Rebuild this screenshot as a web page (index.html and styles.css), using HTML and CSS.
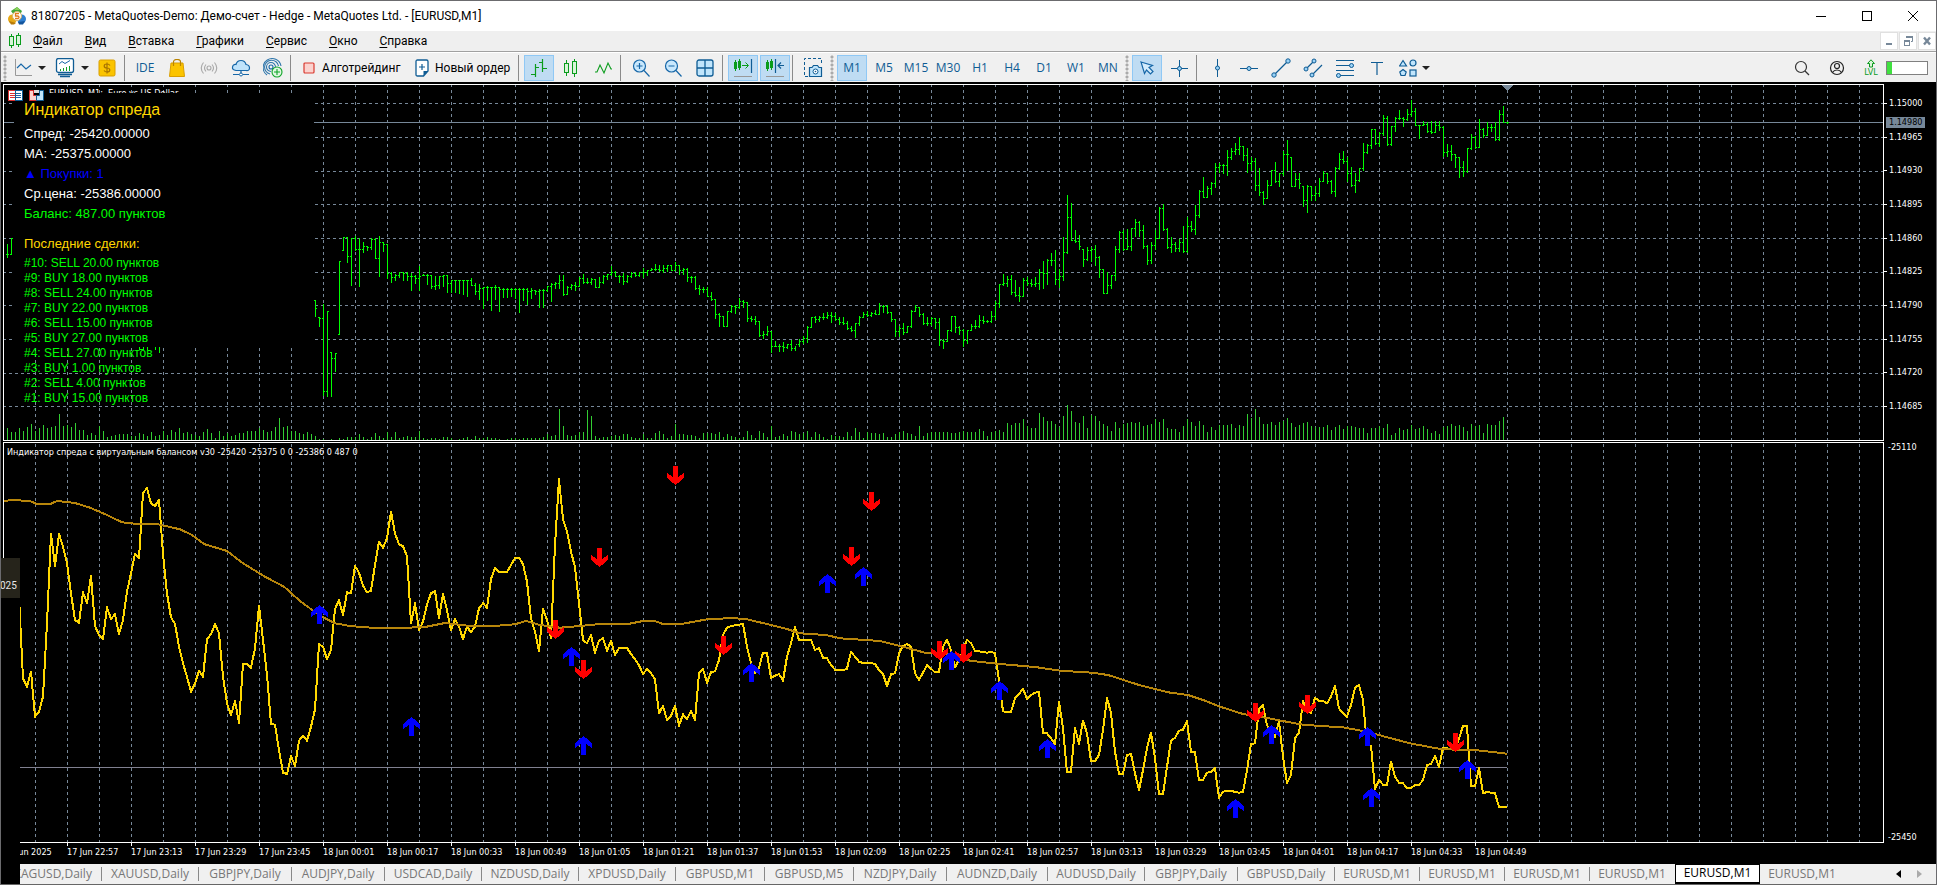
FILE: index.html
```html
<!DOCTYPE html>
<html lang="ru">
<head>
<meta charset="utf-8">
<title>81807205 - MetaQuotes-Demo: Демо-счет - Hedge - MetaQuotes Ltd. - [EURUSD,M1]</title>
<link rel="stylesheet" href="styles.css">
</head>
<body>
<div class="app">
  <header class="titlebar">
    <svg class="logo" width="18" height="18" viewBox="0 0 18 18"><path d="M9 0l5 4-2 4H6L3 4z" fill="#3fa535"/><path d="M6 3l3-3 3 3z" fill="#8bd15a"/><circle cx="4.500" cy="12" r="4.500" fill="#e6a817"/><path d="M1 14l7 2-2 1.500H3z" fill="#b87a08"/><circle cx="13.500" cy="12" r="4.500" fill="#2f7fd0"/><path d="M10 15l7-1-2 3.500h-4z" fill="#14559c"/><circle cx="9" cy="9" r="4.500" fill="#fff" stroke="#d9b56a"/><path d="M11 6.500H7.500V9h2q1.500 0 1.500 1.300T9.500 11.500H7" fill="none" stroke="#e07b1a" stroke-width="1.300"/></svg>
    <h1 class="title">81807205 - MetaQuotes-Demo: Демо-счет - Hedge - MetaQuotes Ltd. - [EURUSD,M1]</h1>
    <div class="window-controls">
      <button aria-label="Свернуть"><svg width="12" height="12"><path d="M1 6.500h10" stroke="#000"/></svg></button>
      <button aria-label="Развернуть"><svg width="12" height="12"><rect x="1.500" y="1.500" width="9" height="9" fill="none" stroke="#000"/></svg></button>
      <button aria-label="Закрыть"><svg width="12" height="12"><path d="M1 1l10 10M11 1L1 11" stroke="#000"/></svg></button>
    </div>
  </header>

  <nav class="menubar">
    <svg class="menu-icon" width="14" height="16"><g stroke="#0a9c1c" fill="#d9f5d9"><path d="M3.500 1v14M10.500 0v14"/><rect x="1.500" y="3.500" width="4" height="9"/><rect x="8.500" y="2.500" width="4" height="9"/></g></svg>
    <a href="#"><u>Ф</u>айл</a>
    <a href="#"><u>В</u>ид</a>
    <a href="#"><u>В</u>ставка</a>
    <a href="#"><u>Г</u>рафики</a>
    <a href="#"><u>С</u>ервис</a>
    <a href="#"><u>О</u>кно</a>
    <a href="#"><u>С</u>правка</a>
    <div class="mdi-controls">
      <button aria-label="Свернуть график"><svg width="12" height="12"><path d="M3 9h6" stroke="#778899" stroke-width="2"/></svg></button>
      <button aria-label="Восстановить график"><svg width="12" height="12"><path d="M4.500 3V1.500h6v5H9" fill="none" stroke="#778899"/><path d="M4 2h7" stroke="#778899" stroke-width="2"/><rect x="2.500" y="5.500" width="5" height="5" fill="#fff" stroke="#778899"/><path d="M2 6h6" stroke="#778899" stroke-width="2"/></svg></button>
      <button aria-label="Закрыть график"><svg width="12" height="12"><path d="M3 2.500l6 7M9 2.500l-6 7" stroke="#778899" stroke-width="2.400"/></svg></button>
    </div>
  </nav>

  <div class="toolbar">
    <span class="grip"></span>
    <button class="tool tool--split" aria-label="Вид графика"><svg width="18" height="18"><path d="M1.500 0v16.500H18" fill="none" stroke="#999"/><path d="M3 9l4-4 5 5 5-4" fill="none" stroke="#1767a8" stroke-width="1.200"/></svg><i class="caret"></i></button>
    <button class="tool tool--split" aria-label="Профили"><svg width="20" height="20"><rect x="1.500" y=".5" width="17" height="14" rx="2" fill="#fff" stroke="#0f5c94" stroke-width="1.300"/><path d="M4 6l3-2.500 3 2 5-3" fill="none" stroke="#1767a8"/><path d="M5.500 13v-2M8.500 13v-3M11.500 13V9M14.500 13V8" stroke="#12a02a"/><path d="M3 16.500h14M5 18.500h10" stroke="#0f5c94" stroke-width="1.300"/></svg><i class="caret"></i></button>
    <button class="tool" aria-label="Счет"><svg width="18" height="18"><rect x="1" y="1" width="16" height="16" rx="1.500" fill="#fbc400" stroke="#d99e00"/><path d="M9 3.500v11M12 6.500Q11 5 9 5 6.200 5 6.200 7T9 9t2.800 2T9 13q-2 0-3-1.500" fill="none" stroke="#a87400" stroke-width="1.200"/></svg></button>
    <span class="sep"></span>
    <button class="tool tool--text">IDE</button>
    <button class="tool" aria-label="Маркет"><svg width="18" height="18"><path d="M3 4h12l1.500 13.500h-15z" fill="#fbc400" stroke="#d99e00"/><path d="M5.500 7V3q0-2.500 3.500-2.500T12.500 3v4" fill="none" stroke="#b98300" stroke-width="1.200"/></svg></button>
    <button class="tool" aria-label="Сигналы"><svg width="18" height="18" fill="none" stroke="#a8a8a8" stroke-width="1.100"><circle cx="9" cy="9" r="2"/><path d="M6 5.500q-3 3.500 0 7M12 5.500q3 3.500 0 7M3.500 3.500q-4.500 5.500 0 11M14.500 3.500q4.500 5.500 0 11"/></svg></button>
    <button class="tool" aria-label="VPS"><svg width="20" height="18"><path d="M5 11.500Q1 11 1.500 8T5 5.500Q6 1.500 10 1.500t5 4Q18.500 6 18.500 9T15 11.500z" fill="#bfe3fb" stroke="#1767a8" stroke-width="1.200"/><path d="M10 12v4M2 15.500h6M12 15.500h6" stroke="#1767a8" stroke-width="1.200"/><circle cx="10" cy="15.500" r="1.500" fill="#fff" stroke="#1767a8"/></svg></button>
    <button class="tool" aria-label="Виртуальный хостинг"><svg width="20" height="20" fill="none" stroke="#1767a8" stroke-width="1.100"><circle cx="8" cy="9" r="2"/><path d="M8 13.500A4.500 4.500 0 1 1 12.500 9M7 16A7 7 0 1 1 15.500 8M4 17A9 9 0 1 1 18 8" stroke="#2f76ab"/><circle cx="14" cy="14" r="5" fill="#e2f7e2" stroke="#0fa527"/><path d="M14 11v6M11 14h6" stroke="#0fa527"/></svg></button>
    <span class="sep"></span>
    <button class="tool tool--label tool--algo"><svg width="12" height="12"><rect x="1" y="1" width="10" height="10" rx="1" fill="#fbd3cf" stroke="#d93a30" stroke-width="1.200"/></svg>Алготрейдинг</button>
    <button class="tool tool--label tool--order"><svg width="14" height="18"><path d="M2.500 1h9Q13 1 13 2.500V12l-4.500 5h-6Q1 17 1 15.500v-13Q1 1 2.500 1z" fill="#fff" stroke="#0f5c94" stroke-width="1.300"/><path d="M13 12H8.500v5z" fill="#0f5c94"/><path d="M7 5v6M4 8h6" stroke="#0f5c94" stroke-width="1.200"/></svg>Новый ордер</button>
    <span class="sep"></span>
    <button class="tool is-active" aria-label="Бары"><svg width="18" height="18" fill="none" stroke="#0a9c1c" stroke-width="1.200"><path d="M5.500 5v13M1 15.500h4.500M5.500 8.500H9M12.500 0v13M9 3.500h3.500M12.500 9.500H17"/></svg></button>
    <button class="tool" aria-label="Свечи"><svg width="18" height="18" stroke="#0a9c1c" fill="#d9f5d9"><path d="M4.500 1v16M12.500 0v18"/><rect x="2.500" y="4.500" width="4" height="9"/><rect x="10.500" y="2.500" width="4" height="12"/></svg></button>
    <button class="tool" aria-label="Линия"><svg width="18" height="18"><path d="M1 13h2l3-7 4 8 4-10 3 6h1" fill="none" stroke="#0a9c1c" stroke-width="1.100"/></svg></button>
    <span class="sep"></span>
    <button class="tool" aria-label="Увеличить"><svg width="18" height="18" fill="none" stroke="#1767a8" stroke-width="1.200"><circle cx="7.500" cy="7" r="6" fill="#c9e8fd"/><path d="M12 11.500l5.500 6M7.500 4v6M4.500 7h6"/></svg></button>
    <button class="tool" aria-label="Уменьшить"><svg width="18" height="18" fill="none" stroke="#1767a8" stroke-width="1.200"><circle cx="7.500" cy="7" r="6" fill="#c9e8fd"/><path d="M12 11.500l5.500 6M4.500 7h6"/></svg></button>
    <button class="tool" aria-label="Сетка окон"><svg width="18" height="18"><rect x="1" y="1" width="16" height="16" rx="2" fill="#c0e5fc" stroke="#0f5c94" stroke-width="1.300"/><path d="M9 1v16M1 9h16" stroke="#0f5c94" stroke-width="1.300"/></svg></button>
    <span class="sep"></span>
    <button class="tool is-active" aria-label="Автопрокрутка"><svg width="20" height="20" fill="none" stroke="#0a9c1c"><path d="M2.500 2v11M6.500 1v11M9 7.500h6M12.500 4.500l3 3-3 3"/><rect x="1.500" y="4.500" width="2" height="6"/><rect x="5.500" y="3.500" width="2" height="6"/><path d="M18.500 1v14" stroke="#0f5c94" stroke-width="1.200"/><path d="M1 18.500h18" stroke="#999"/></svg></button>
    <button class="tool is-active" aria-label="Сдвиг графика"><svg width="20" height="20" fill="none" stroke="#0a9c1c"><path d="M2.500 2v11M6.500 1v11"/><rect x="1.500" y="4.500" width="2" height="6"/><rect x="5.500" y="3.500" width="2" height="6"/><path d="M10.500 1v14M19 7.500h-6M16 4.500l-3 3 3 3" stroke="#0f5c94" stroke-width="1.200"/><path d="M1 18.500h18" stroke="#999"/></svg></button>
    <span class="sep"></span>
    <button class="tool" aria-label="Снимок"><svg width="20" height="20"><path d="M5 18.500H1.500v-18h17V7" fill="none" stroke="#0f5c94" stroke-dasharray="3 2"/><path d="M6.500 9.500H9l1.500-2h4l1.500 2h2.500v9h-12z" fill="#c0e5fc" stroke="#0f5c94" stroke-width="1.200"/><circle cx="12.500" cy="13.500" r="2.500" fill="#fff" stroke="#0f5c94"/><circle cx="12.500" cy="13.500" r=".8" fill="#0f5c94"/></svg></button>
    <span class="grip"></span>
    <button class="tool tool--text is-active">M1</button>
    <button class="tool tool--text">M5</button>
    <button class="tool tool--text">M15</button>
    <button class="tool tool--text">M30</button>
    <button class="tool tool--text">H1</button>
    <button class="tool tool--text">H4</button>
    <button class="tool tool--text">D1</button>
    <button class="tool tool--text">W1</button>
    <button class="tool tool--text">MN</button>
    <span class="grip"></span>
    <button class="tool is-active" aria-label="Курсор"><svg width="18" height="18"><path d="M3 3l11.500 3.500-3.500 2 4 4-2.500 2.500-4-4-2 3.500z" fill="#d4ecfc" stroke="#1767a8" stroke-width="1.200"/></svg></button>
    <button class="tool" aria-label="Перекрестие"><svg width="18" height="18" stroke="#0f5c94"><path d="M9.500 1v17M1 9.500h17"/><circle cx="9.500" cy="9.500" r="2" fill="#9bd3f7"/></svg></button>
    <span class="sep"></span>
    <button class="tool" aria-label="Вертикальная линия"><svg width="18" height="20" stroke="#0f5c94"><path d="M9.500 1v18"/><circle cx="9.500" cy="10" r="2" fill="#9bd3f7"/></svg></button>
    <button class="tool" aria-label="Горизонтальная линия"><svg width="20" height="18" stroke="#0f5c94"><path d="M1 9.500h18"/><circle cx="10" cy="9.500" r="2" fill="#9bd3f7"/></svg></button>
    <button class="tool" aria-label="Трендовая линия"><svg width="20" height="20" stroke="#0f5c94"><path d="M3 17L17 3" stroke-width="1.200"/><circle cx="3" cy="17" r="2.200" fill="#9bd3f7"/><circle cx="17" cy="3" r="2.200" fill="#9bd3f7"/></svg></button>
    <button class="tool" aria-label="Канал"><svg width="20" height="20" stroke="#0f5c94"><path d="M3 11l8-8M9 17L19 7" stroke-width="1.200"/><circle cx="3" cy="11" r="2" fill="#9bd3f7"/><circle cx="11" cy="3" r="2" fill="#9bd3f7"/><circle cx="9" cy="17" r="2" fill="#9bd3f7"/></svg></button>
    <button class="tool" aria-label="Фибоначчи"><svg width="20" height="20" stroke="#0f5c94"><path d="M1 2.500h18M1 7.500h18M1 12.500h18M1 17.500h18"/><circle cx="16.500" cy="7.500" r="2" fill="#9bd3f7"/><circle cx="3.500" cy="17.500" r="2" fill="#9bd3f7"/></svg></button>
    <button class="tool" aria-label="Текст"><svg width="16" height="16"><path d="M2 2.500h12M8 2.500V15" stroke="#0f5c94" stroke-width="1.200"/></svg></button>
    <button class="tool tool--shapes" aria-label="Фигуры"><svg width="18" height="18" fill="#c0e5fc" stroke="#0f5c94" stroke-width="1.200"><path d="M4 1.500L7.500 7h-7z"/><circle cx="14" cy="4" r="3"/><path d="M4 10.500l3.200 2.500-1.200 3.500H2L.8 13z"/><rect x="11" y="11" width="6" height="6"/></svg><i class="caret"></i></button>
    <div class="toolbar-end">
      <button class="tool" aria-label="Поиск"><svg width="16" height="16" fill="none" stroke="#333" stroke-width="1.200"><circle cx="7" cy="7" r="5.500"/><path d="M11 11l4 4"/></svg></button>
      <button class="tool" aria-label="Профиль"><svg width="16" height="16" fill="none" stroke="#222" stroke-width="1.200"><circle cx="8" cy="8" r="6.500"/><circle cx="8" cy="6" r="2.500"/><path d="M3.500 12.500Q5 10 8 10t4.500 2.500"/></svg></button>
      <span class="lvl"><svg width="10" height="9"><path d="M5 .8L8.500 4.500H6.500V8H3.500V4.500h-2z" fill="#d9f5d9" stroke="#0a9c1c"/></svg>LVL</span>
      <span class="meter"><i></i></span>
    </div>
  </div>

  <main class="charts">
    <section class="panel panel--price">
      <div class="plot" id="price"></div>
      <ol class="scale">
        <li>1.15000</li><li>1.14965</li><li>1.14930</li><li>1.14895</li><li>1.14860</li><li>1.14825</li><li>1.14790</li><li>1.14755</li><li>1.14720</li><li>1.14685</li>
      </ol>
      <span class="price-tag">1.14980</span>
      <div class="symbol">EURUSD, M1:  Euro vs US Dollar</div>
      <div class="info">
        <h2>Индикатор спреда</h2>
        <p>Спред: -25420.00000</p>
        <p>MA: -25375.00000</p>
        <p class="buy">▲ Покупки: 1</p>
        <p>Ср.цена: -25386.00000</p>
        <p class="gain">Баланс: 487.00 пунктов</p>
        <h3>Последние сделки:</h3>
        <ul>
          <li>#10: SELL 20.00 пунктов</li><li>#9: BUY 18.00 пунктов</li><li>#8: SELL 24.00 пунктов</li><li>#7: BUY 22.00 пунктов</li><li>#6: SELL 15.00 пунктов</li><li>#5: BUY 27.00 пунктов</li><li>#4: SELL 27.00 пунктов</li><li>#3: BUY 1.00 пунктов</li><li>#2: SELL 4.00 пунктов</li><li>#1: BUY 15.00 пунктов</li>
        </ul>
      </div>
      <div class="badges">
        <svg width="15" height="12"><rect x=".5" y=".5" width="7" height="10" fill="#fff" stroke="#d92f2f"/><rect x="7.500" y=".5" width="7" height="10" fill="#fff" stroke="#0f5c94"/><path d="M2 3.500h5M2 5.500h5M2 7.500h5" stroke="#d92f2f"/><path d="M8 3.500h5M8 5.500h5M8 7.500h5" stroke="#1767a8"/></svg>
        <svg width="15" height="12"><path d="M.5.500h4v5h3v5h-7z" fill="#fbd3cf" stroke="#d92f2f"/><path d="M14.500.500h-4v5h-3v5h7z" fill="#c0e5fc" stroke="#0f5c94"/><rect x="5" y="0" width="5" height="3" fill="#ddd"/></svg>
      </div>
    </section>
    <section class="panel panel--spread">
      <div class="plot" id="spread"></div>
      <ol class="scale"><li>-25110</li><li>-25450</li></ol>
      <div class="caption">Индикатор спреда с виртуальным балансом v30 -25420 -25375 0 0 -25386 0 487 0</div>
    </section>
    <ol class="timeline" id="timeline"></ol>
    <div class="edge"><span>025</span></div>
  </main>

  <nav class="tabs">
    <a href="#" class="tab w97">XAGUSD,Daily</a>
    <a href="#" class="tab w97">XAUUSD,Daily</a>
    <a href="#" class="tab">GBPJPY,Daily</a>
    <a href="#" class="tab">AUDJPY,Daily</a>
    <a href="#" class="tab w97">USDCAD,Daily</a>
    <a href="#" class="tab w97">NZDUSD,Daily</a>
    <a href="#" class="tab w97">XPDUSD,Daily</a>
    <a href="#" class="tab w89">GBPUSD,M1</a>
    <a href="#" class="tab w89">GBPUSD,M5</a>
    <a href="#" class="tab">NZDJPY,Daily</a>
    <a href="#" class="tab w101">AUDNZD,Daily</a>
    <a href="#" class="tab w97">AUDUSD,Daily</a>
    <a href="#" class="tab">GBPJPY,Daily</a>
    <a href="#" class="tab w97">GBPUSD,Daily</a>
    <a href="#" class="tab w85">EURUSD,M1</a>
    <a href="#" class="tab w85">EURUSD,M1</a>
    <a href="#" class="tab w85">EURUSD,M1</a>
    <a href="#" class="tab w85 tab--bare">EURUSD,M1</a>
    <a href="#" class="tab w85 tab--current" aria-current="page">EURUSD,M1</a>
    <a href="#" class="tab w85 tab--bare">EURUSD,M1</a>
    <div class="tab-scroll">
      <button aria-label="Назад"><svg width="5" height="8"><path d="M5 0v8L0 4z" fill="#000"/></svg></button>
      <button aria-label="Вперед"><svg width="5" height="8"><path d="M0 0v8l5-4z" fill="#aaa"/></svg></button>
    </div>
  </nav>
</div>
<script src="chart.js"></script>
</body>
</html>
```

FILE: styles.css
```css
* { box-sizing: border-box; }
body { margin: 0; background: #000; font: 12px/16px "Open Sans", "Noto Sans", sans-serif; color: #000; }
h1, h2, h3, p, ul, ol { margin: 0; padding: 0; font-weight: 400; list-style: none; }
button { border: 0; padding: 0; background: none; font: inherit; color: inherit; }
a { color: inherit; text-decoration: none; }
svg { display: block; flex: none; }

.app { display: flex; flex-direction: column; height: 100vh; overflow: hidden; border: 1px solid #6b6b6e; border-bottom-color: #666; }

.titlebar { display: flex; align-items: center; flex: none; height: 30px; padding-left: 7px; background: #fff; }
.title { margin-left: 5px; font: 12px/16px Roboto, sans-serif; flex: 1; white-space: nowrap; }
.window-controls { display: flex; }
.window-controls button { width: 46px; height: 30px; display: grid; place-items: center; }

.menubar { display: flex; align-items: center; flex: none; height: 21px; padding-left: 7px; background: #efefef; border-bottom: 1px solid #a0a0a0; font-family: Roboto, sans-serif; }
.menu-icon { margin-right: 7px; }
.menubar a { padding: 0 11px 0 4px; margin-right: 7px; }
.menubar u { text-underline-offset: 2px; }
.mdi-controls { display: flex; gap: 1px; margin-left: auto; }
.mdi-controls button { width: 18px; height: 18px; display: grid; place-items: center; background: #fff; border: 1px solid #e0e0e0; }

.toolbar { display: flex; align-items: center; gap: 2px; flex: none; height: 30px; padding: 1px 8px 0 2px; background: #f0f0f0; border-top: 1px solid #fff; color: #000; }
.grip { width: 5px; height: 26px; background: radial-gradient(circle at 2px 2px, #aaa 1px, transparent 2px) 0 0 / 5px 4px; }
.sep { width: 4px; height: 26px; border-left: 1px solid #8a8a8a; }
.tool { flex: none; width: 30px; height: 26px; display: flex; align-items: center; justify-content: center; border: 1px solid transparent; white-space: nowrap; }
.tool.is-active { background: #bfdcf3; border-color: #8fc8f5; }
.tool--split { width: 39px; justify-content: flex-start; gap: 6px; padding-left: 3px; }
.tool--text { color: #0f5c94; }
.tool--label { justify-content: flex-start; padding-left: 6px; gap: 7px; font-family: Roboto, sans-serif; }
.tool--algo { width: 110px; }
.tool--order { width: 108px; gap: 6px; }
.tool--shapes { width: 40px; gap: 5px; }
.caret { border: 4px solid transparent; border-top-color: #222; border-bottom: 0; }
.toolbar-end { display: flex; align-items: center; margin-left: auto; gap: 1px; }
.toolbar-end .tool { margin-right: 4px; }
.lvl { width: 28px; display: flex; flex-direction: column; align-items: center; font: 9px/9px "DejaVu Sans Condensed", sans-serif; color: #0a9c1c; }
.meter { width: 42px; height: 14px; border: 1px solid #808080; background: #fff; }
.meter i { display: block; width: 5px; height: 12px; background: #40e040; }

.charts { position: relative; flex: 1; min-height: 0; display: flex; flex-direction: column; background: #000; padding: 2px 0 0 2px; color: #fff; font: 9px/11px "DejaVu Sans Condensed", "DejaVu Sans", sans-serif; }
.panel { position: relative; display: flex; min-height: 0; }
.panel--price { flex: 357 1 0; margin-bottom: 1px; }
.panel--spread { flex: 401 1 0; }
.plot { flex: 1; min-width: 0; border: 1px solid #fff; overflow: hidden; }
.scale { width: 52px; display: flex; flex-direction: column; justify-content: space-between; }
.panel--price .scale { padding: 14px 0 29px; }
.panel--spread .scale { padding: 0; }
.scale li { display: flex; align-items: center; gap: 2px; white-space: nowrap; }
.panel--price .scale li::before { content: ""; width: 3px; height: 1px; background: #fff; }
.panel--spread .scale li { padding-left: 4px; }
.price-tag { position: absolute; right: 11px; top: 33px; width: 39px; padding-left: 3px; background: #778899; color: #000; }
.symbol { position: absolute; left: 46px; top: 4px; white-space: pre; }
.caption { position: absolute; left: 4px; top: 5px; }

.info { position: absolute; left: 11px; top: 9px; width: 300px; height: 254px; padding: 7px 0 0 10px; background: #000; font: 13px/20px "Liberation Sans", Arial, sans-serif; white-space: nowrap; }
.info h2 { margin-bottom: 4px; font-size: 16px; line-height: 20px; color: #ffd700; }
.info h3 { margin-top: 10px; font-size: 13px; line-height: 20px; color: #ffd700; }
.info ul { margin-top: 2px; font-size: 12px; line-height: 15px; color: #0f0; }
.info .buy { color: #00f; }
.info .gain { color: #0f0; }
.badges { position: absolute; left: 5px; top: 6px; display: flex; gap: 6px; }

.timeline { display: flex; flex: none; height: 21px; overflow: hidden; }
.timeline li { flex: none; width: 64px; padding-top: 4px; white-space: nowrap; position: relative; }
.timeline li::before { content: ""; position: absolute; left: 0; top: 0; width: 1px; height: 3px; background: #fff; }
.edge { position: absolute; left: -1px; bottom: -21px; width: 20px; height: 327px; background: #000; z-index: 1; }
.edge span { display: block; height: 40px; padding-top: 21px; background: #26241b; font: 10px/14px Roboto, sans-serif; color: #e8e8e8; }

.tabs { display: flex; align-items: center; flex: none; height: 20px; padding-left: 4px; background: #f0f0f0; color: #777; }
.tab { flex: none; width: 93px; height: 14px; line-height: 14px; text-align: center; border-right: 1px solid #888; white-space: nowrap; }
.w85 { width: 85px; }
.w89 { width: 89px; }
.w97 { width: 97px; }
.w101 { width: 101px; }
.tab--bare { border-right-color: transparent; }
.tab--current { height: 20px; line-height: 16px; background: #fff; border: 1px solid #000; border-bottom-width: 2px; color: #000; }
.tab-scroll { display: flex; gap: 16px; margin-left: auto; padding-right: 14px; }
```

FILE: chart.js
```js
(function () {
  var NS = 'http://www.w3.org/2000/svg';
  var STEP = 4;

  function nums(s) { return s.trim().split(/[\s,]+/).map(Number); }

  function el(parent, name, attrs) {
    var n = document.createElementNS(NS, name);
    for (var k in attrs) n.setAttribute(k, attrs[k]);
    parent.appendChild(n);
    return n;
  }

  function surface(id, left, top) {
    var host = document.getElementById(id);
    var svg = el(host, 'svg', { width: '100%', height: '100%' });
    var g = el(svg, 'g', { transform: 'translate(' + -left + ' ' + -top + ')', 'shape-rendering': 'crispEdges', fill: 'none' });
    return { g: g, right: left + host.clientWidth, bottom: top + host.clientHeight };
  }

  function verticals(s, y0) {
    var d = '';
    for (var x = 35; x < s.right; x += 32) d += 'M' + (x + 0.5) + ' ' + y0 + 'V' + s.bottom;
    el(s.g, 'path', { d: d, stroke: '#778899', 'stroke-dasharray': '3 3' });
  }

  /* price panel */
  var p = surface('price', 4, 85);
  verticals(p, 84);
  var hd = '';
  [103, 137, 171, 204, 238, 272, 305, 339, 373, 406].forEach(function (y) { hd += 'M3 ' + (y + 0.5) + 'H' + p.right; });
  el(p.g, 'path', { d: hd, stroke: '#778899', 'stroke-dasharray': '3 3' });
  el(p.g, 'path', { d: 'M3 122.5H' + p.right, stroke: '#778899' });
  el(p.g, 'path', { d: 'M1502 85h11l-5.500 6z', fill: '#778899' });

  /* volume heights, one per bar from x = 7 */
  var vol = [
    [7, '12 8 8 12 9 13 16 9 12 15 12 13 14 26 14 15 13 17 10 10 5 7 5 14 9 3 4 5 6 6 6 4 4 7 6 4 8 4 5 9 5 10 8 12 7 8 6 5 4 8 11 7 2 9 4 7 4 5 7 7 9 9 9 12 10 8 9 13 22 13 14 9 9 7 6 8 6 4'],
    [319, '1 1 0 1 0 2 1 3 3 3 6 3 1 3 7 4 2 8 3 8 2 3 4 3 3 9 2 1 2 2 1 3 3 2 0 1 2 3 1 4 2 2 3 2 2 1 0 1 2 2 1 2 2 2 2 2 3 6 4 5 31 14 5 4 5 8 8 30 24 4 2 3 3 4 5 4 6 6 3 2 2 6 2 2 7 9 6 2 4 16 6 6 5 5 4 2 7 7 7 6 8 3 6 4 3 2 3 9 5 2 9 7 3 14 3 4 6 4 9 8 6 7 9 3 8 6 3 1 5 4 4 3 8 4 12 8 2 8 7 7 6'],
    [883, '7 3 3 6 8 9 7 6 4 14 4 7 8 8 8 8 8 7 7 8 9 8 8 8 11 9 4 8 9 10 8 17 15 17 17 21 14 12 12 27 23 19 19 16 13 24 35 29 18 17 24 12 25 24 19 16 14 9 18 12 16 17 18 17 18 14 15 16 21 18 21 12 11 11 8 14 21 18 14 19 15 8 13 10 15 15 15 16 12 15 14 26 22 31 23 16 16 18 15 18 19 22 17 13 15 17 18 14 13 13 13 15 10 13 15 11 14 14 13 12 12 7 12 12 14 12 16 5 7 12 10 11 15 11 12 14 11 7 9 6 13 14 16 14 15 13 9 16 14 15 7 16 15 15 19 23']
  ];
  var vd = '';
  vol.forEach(function (v) {
    nums(v[1]).forEach(function (h, i) { vd += 'M' + (v[0] + i * STEP + 0.5) + ' 440v' + -h; });
  });
  el(p.g, 'path', { d: vd, stroke: '#32cd32' });

  /* bars as high, low, close in thirds of a pixel; the open is the previous close */
  var bars = [
    [7, 80, 523, '493 533 523, 475 523 476'],
    [315, 220, 240, '240 288 265, 291 320 295, 252 525 515, 273 528 273, 396 530 415, 400 453 400, 124 342 124, 52 90 52, 52 126 108, 55 195 55, 50 92 88, 55 200 88, 67 98 79, 79 90 82, 56 87 58, 56 116 115, 48 168 68, 68 93 72, 72 175 160, 156 186 172, 163 180 167, 157 173 157, 157 182 160, 157 182 168, 160 212 168, 165 190 175, 138 212 170, 163 167 165, 163 192 165, 167 205 200, 168 207 197, 168 204 170, 166 200 166, 166 218 190, 180 218 182, 180 218 182, 181 219 182, 181 222 182, 181 228 180, 175 196 195, 190 222 215, 192 237 205, 203 266 203, 200 240 203, 203 272 203, 196 237 203, 203 273 207, 205 232 207, 205 232 207, 205 228 207, 205 236 207, 205 278 207, 205 240 207, 205 252 213, 205 235 212, 210 222 213, 207 263 210, 207 262 210, 200 215 200, 190 243 193, 186 205 190, 165 205 182, 165 225 222, 200 224 203, 193 207 195, 186 210 200, 173 200 175, 163 190 186, 175 190 188, 175 192 177, 178 203 202, 173 203 187, 165 190 168, 162 178 163, 140 165 157, 153 168 168, 166 186 170, 160 192 184, 167 187 168, 157 172 160, 158 168 166, 157 168 158, 145 173 157, 151 165 152, 145 152 148, 132 150 148, 135 153 150, 135 156 146, 136 155 136, 135 152 150, 127 150 135, 136 162 150, 145 162 148, 145 183 172, 168 186 172, 168 209 205, 197 222 207, 201 218 208, 202 230 229, 218 240 238, 238 296 284, 280 320 290, 290 320 318, 273 320 275, 256 277 258, 257 280 262, 235 265 243, 242 262 248, 247 305 295, 290 303 297, 290 312 304, 304 350 347, 333 354 343, 318 347 334, 333 398 378, 363 380 379, 372 393 378, 366 395 382, 372 385 373, 362 390 386, 378 392 373, 357 380 364, 350 370 355, 318 368 322, 291 322 292, 288 308 298, 288 303 292, 279 298 292, 278 294 285, 276 308 290, 280 300 298, 293 312 307, 291 312 310, 303 328 325, 320 335 332, 310 353 310, 288 315 292, 278 293 282, 275 290 287, 276 290 280, 272 284 282, 250 282 258, 255 276 260, 255 280 278, 276 303 298, 298 350 335'],
    [899, 80, 755, '740 770 745, 730 762 757, 738 758 740, 690 743 693, 676 695 682, 682 710 703, 700 732 730, 711 735 730, 711 737 714, 714 746 728, 714 795 780, 778 806 784, 750 785 752, 709 755 710, 709 758 742, 738 763 750, 748 800 782, 750 790 751, 732 752 740, 720 745 740, 705 743 722, 708 730 724, 720 728 725, 693 728 710, 664 718 670, 612 682 613, 583 615 610, 588 620 598, 585 642 637, 600 648 645, 622 665 650, 594 650 602, 592 615 610, 597 620 613, 591 620 610, 567 628 577, 543 624 580, 537 614 541, 519 557 541, 510 613 598, 568 622 590, 472 602 517, 345 521 412, 369 482 480, 450 488 484, 465 508 498, 508 560 538, 502 540 511, 502 545 508, 495 555 533, 528 593 568, 568 640 640, 578 640 615, 585 625 587, 498 602 508, 453 518 458, 450 510 507, 447 508 500, 445 512 445, 417 470 428, 423 470 452, 435 506 498, 496 553 541, 487 550 497, 450 508 475, 381 475 384, 373 450 448, 444 506 502, 472 518 493, 488 515 505, 477 515 487, 438 516 514, 413 516 440, 423 453 447, 375 463 405, 330 413 334, 291 353 352, 320 353 325, 306 342 309, 250 323 262, 250 278 255, 252 280 256, 210 285 233, 204 237 213, 189 224 208, 173 224 200, 200 242 226, 204 278 249, 232 272 245, 235 332 316, 264 345 336, 333 372 355, 300 356 316, 270 316 272, 246 308 304, 280 318 280, 215 285 223, 180 270 223, 232 320 320, 280 320 297, 280 325 310, 319 380 360, 315 396 320, 318 362 345, 318 362 341, 294 348 303, 273 305 280, 280 310 303, 300 341 334, 263 350 265, 220 267 238, 213 251 244, 232 303 280, 262 318 317, 280 338 300, 264 305 266, 189 272 217, 192 220 196, 148 206 149, 148 194 190, 156 198 160, 105 165 115, 108 197 193, 138 195 140, 113 155 115, 90 117 116, 111 140 118, 87 120 104, 60 108 94, 84 137 136, 136 176 136, 123 137 134, 128 158 153, 124 161 157, 123 158 136, 124 152 142, 138 228 217, 192 230 215, 195 240 224, 222 262 233, 232 293 263, 245 290 275, 204 277 206, 163 208 172, 170 206 203, 117 203 149, 145 171 166, 127 166 142, 132 155 142, 128 182 178, 90 182 103, 78 127 127, 127 129 127']
  ];
  var bd = '';
  bars.forEach(function (b) {
    var v = nums(b[3]), open = b[2];
    function y(t) { return Math.floor(b[1] + t / 3); }
    for (var i = 0; i < v.length; i += 3) {
      var x = b[0] + (i / 3) * STEP;
      bd += 'M' + (x + 0.5) + ' ' + y(v[i]) + 'V' + (y(v[i + 1]) + 1);
      bd += 'M' + (x - 1) + ' ' + (y(Math.max(v[i], Math.min(open, v[i + 1]))) + 0.5) + 'h1';
      bd += 'M' + (x + 1) + ' ' + (y(v[i + 2]) + 0.5) + 'h1';
      open = v[i + 2];
    }
  });
  /* lows that stick out under the info box */
  bd += 'M139.5 347v3M143.5 347v3M147.5 347v3M140 349.5h3M155.5 347v3M159.5 347v6';
  el(p.g, 'path', { d: bd, stroke: '#00ff00' });

  /* spread panel */
  var s = surface('spread', 4, 443);
  verticals(s, 444);
  el(s.g, 'path', { d: 'M4 767.5H1507', stroke: '#808090' });

  var ma = nums('4 213 12 210 30 213 36 221 51 221 57 213 75 219 90 233 107 255 122 277 135 281 158 283 180 298 192 315 204 342 227 363 243 400 265 440 284 470 300 513 319 555 335 580 350 588 375 594 400 594 425 591 445 579 468 587 498 587 515 583 526 573 540 585 560 593 580 588 600 582 628 582 643 573 655 573 662 581 683 581 707 568 733 564 747 568 768 583 788 598 800 610 826 615 840 625 880 633 905 652 925 668 950 672 970 692 1000 702 1035 711 1060 722 1092 728 1108 735 1140 766 1168 787 1188 795 1205 812 1220 830 1243 852 1271 866 1300 883 1320 888 1343 892 1368 906 1385 920 1410 940 1442 958 1475 960 1507 971');
  var spread = nums('500 745 770 725 860 845 800 580 312 408 312 350 400 490 570 578 487 520 437 588 615 627 532 567 552 612 570 485 430 372 385 188 175 220 228 210 370 490 562 582 650 700 740 786 760 722 740 628 612 583 610 740 820 855 813 878 703 703 713 655 528 630 735 882 884 960 1028 1032 978 1008 932 917 932 890 838 643 650 688 660 537 510 555 487 490 408 428 467 487 482 405 335 353 325 245 310 343 349 378 580 520 600 575 523 490 483 565 493 540 600 567 590 627 590 607 590 535 520 533 447 413 426 426 426 405 384 383 402 455 565 605 663 537 570 625 345 148 268 305 365 412 520 630 640 615 668 632 625 662 632 675 654 654 654 672 688 706 732 717 730 748 850 828 870 857 828 887 853 868 842 870 730 717 758 727 724 690 615 593 588 586 584 582 650 700 730 713 668 670 745 737 732 752 680 640 592 630 630 630 630 660 655 683 685 705 719 721 721 716 666 680 695 699 699 699 702 720 732 768 733 730 670 648 642 650 730 750 728 705 716 727 725 650 629 660 712 690 660 629 640 662 664 666 668 665 670 750 844 846 846 805 793 776 806 795 788 786 908 910 925 942 815 895 1026 1026 893 942 872 910 993 993 975 900 803 850 965 1031 1031 975 972 1030 1080 1020 955 908 985 1092 1092 1010 932 923 902 899 873 965 966 1050 1050 1028 1026 1015 1104 1085 1082 1082 1086 1088 1086 1020 942 940 838 826 885 905 920 875 980 1060 1035 925 908 812 840 848 803 813 813 820 800 768 835 850 860 825 773 765 810 945 947 1078 1050 1064 1064 995 1040 1058 1060 1074 1073 1066 1065 1050 1005 1002 978 1010 955 955 958 960 925 888 888 1068 1068 1015 1090 1086 1088 1090 1130 1130 1130');

  function line(points, color) {
    el(s.g, 'polyline', { points: points.join(' '), stroke: color, 'stroke-width': 2, 'stroke-linejoin': 'round' });
  }
  line(spread.map(function (t, i) { return (19 + i * STEP) + ',' + (430 + t / 3).toFixed(1); }), '#ffd700');
  var mp = [];
  for (var i = 0; i < ma.length; i += 2) mp.push(ma[i] + ',' + (430 + ma[i + 1] / 3).toFixed(1));
  line(mp, '#b8860b');

  var sells = [[599, 548], [555, 620], [583, 660], [675, 466], [871, 492], [851, 547], [723, 636], [939, 641], [963, 644], [1255, 703], [1307, 695], [1455, 733]];
  var buys = [[319, 605], [411, 717], [571, 647], [583, 736], [751, 663], [827, 574], [863, 567], [951, 651], [999, 681], [1047, 739], [1235, 799], [1271, 725], [1367, 727], [1371, 788], [1467, 760]];
  sells.forEach(function (a) {
    el(s.g, 'path', { d: 'M' + a[0] + ' ' + a[1] + 'm-2 0h5v11l6-4v5l-8.500 7l-8.500-7v-5l6 4z', fill: '#ff0000' });
  });
  buys.forEach(function (a) {
    el(s.g, 'path', { d: 'M' + a[0] + ' ' + a[1] + 'm.5 0l8.500 7v5l-6-4v11h-5v-11l-6 4v-5z', fill: '#0000ff' });
  });

  /* time labels every 16 minutes */
  var list = document.getElementById('timeline');
  function label(text) {
    var li = document.createElement('li');
    li.textContent = text;
    list.appendChild(li);
  }
  label('17 Jun 2025');
  function two(n) { return (n < 10 ? '0' : '') + n; }
  for (var k = 0, m = 22 * 60 + 57; k < 23; k++, m += 16) {
    var day = m >= 1440 ? 18 : 17, t = m % 1440;
    label(day + ' Jun ' + two(Math.floor(t / 60)) + ':' + two(t % 60));
  }
})();
```
